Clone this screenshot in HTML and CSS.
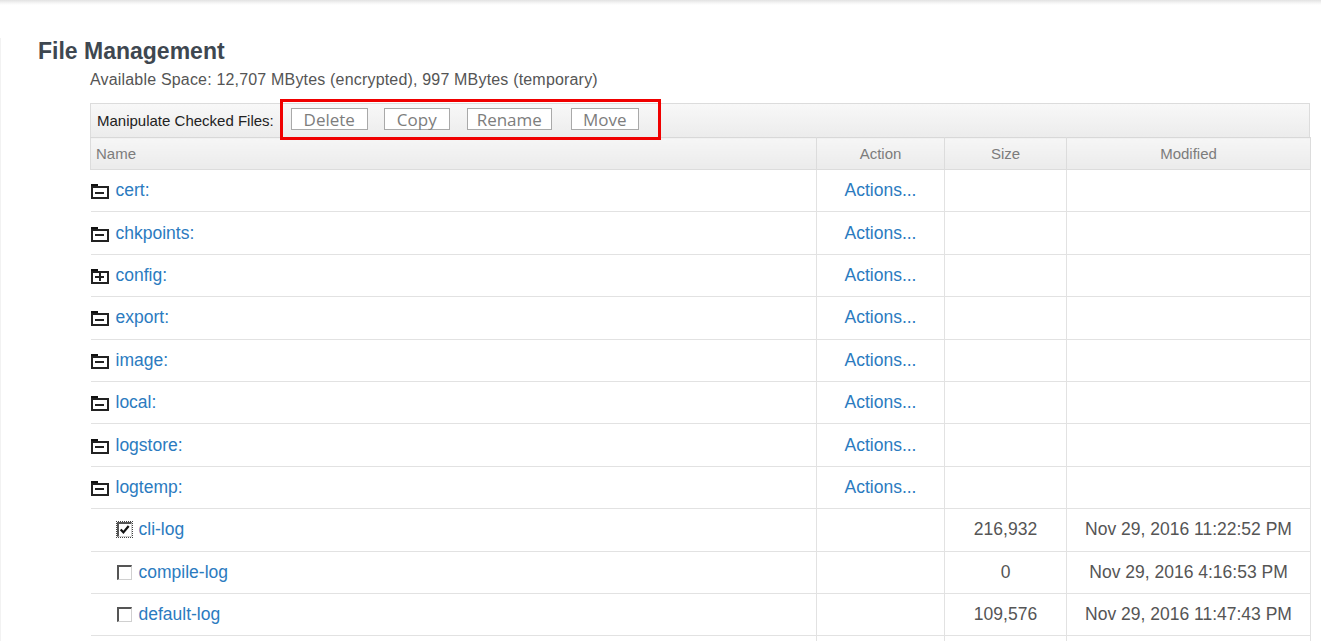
FILE: index.html
```html
<!DOCTYPE html>
<html>
<head>
<meta charset="utf-8">
<title>File Management</title>
<link rel="stylesheet" href="styles.css">
</head>
<body>
<div class="topshade"></div>
<div class="page">
  <h1 class="title">File Management</h1>
  <div class="content">
    <div class="space">Available Space: 12,707 MBytes (encrypted), 997 MBytes (temporary)</div>
    <div class="toolbar">
      <span class="tb-label">Manipulate Checked Files:</span>
      <div class="btn-group">
        <button class="btn btn-delete">Delete</button>
        <button class="btn btn-copy">Copy</button>
        <button class="btn btn-rename">Rename</button>
        <button class="btn btn-move">Move</button>
      </div>
    </div>
    <table class="files">
      <colgroup>
        <col class="c-name"><col class="c-action"><col class="c-size"><col class="c-mod">
      </colgroup>
      <thead>
        <tr><th class="h-name">Name</th><th>Action</th><th>Size</th><th>Modified</th></tr>
      </thead>
      <tbody>
        <tr><td class="name"><span class="folder minus"></span><a href="#">cert:</a></td><td class="act"><a href="#">Actions...</a></td><td></td><td></td></tr>
        <tr><td class="name"><span class="folder minus"></span><a href="#">chkpoints:</a></td><td class="act"><a href="#">Actions...</a></td><td></td><td></td></tr>
        <tr><td class="name"><span class="folder plus"></span><a href="#">config:</a></td><td class="act"><a href="#">Actions...</a></td><td></td><td></td></tr>
        <tr><td class="name"><span class="folder minus"></span><a href="#">export:</a></td><td class="act"><a href="#">Actions...</a></td><td></td><td></td></tr>
        <tr><td class="name"><span class="folder minus"></span><a href="#">image:</a></td><td class="act"><a href="#">Actions...</a></td><td></td><td></td></tr>
        <tr><td class="name"><span class="folder minus"></span><a href="#">local:</a></td><td class="act"><a href="#">Actions...</a></td><td></td><td></td></tr>
        <tr><td class="name"><span class="folder minus"></span><a href="#">logstore:</a></td><td class="act"><a href="#">Actions...</a></td><td></td><td></td></tr>
        <tr><td class="name"><span class="folder minus"></span><a href="#">logtemp:</a></td><td class="act"><a href="#">Actions...</a></td><td></td><td></td></tr>
        <tr><td class="name file"><span class="cb checked"><svg viewBox="0 0 10 10" width="11" height="11"><path d="M1.5 5 L4 7.6 L8.8 1.8" fill="none" stroke="#111" stroke-width="2"/></svg></span><a href="#">cli-log</a></td><td></td><td class="num">216,932</td><td class="num">Nov 29, 2016 11:22:52 PM</td></tr>
        <tr><td class="name file"><span class="cb"></span><a href="#">compile-log</a></td><td></td><td class="num">0</td><td class="num">Nov 29, 2016 4:16:53 PM</td></tr>
        <tr><td class="name file"><span class="cb"></span><a href="#">default-log</a></td><td></td><td class="num">109,576</td><td class="num">Nov 29, 2016 11:47:43 PM</td></tr>
        <tr><td class="name file"></td><td></td><td></td><td></td></tr>
      </tbody>
    </table>
  </div>
</div>
</body>
</html>
```

FILE: styles.css
```css
html, body {
  margin: 0;
  padding: 0;
  background: #fff;
  font-family: "Liberation Sans", Arial, sans-serif;
  overflow: hidden;
}

.topshade {
  height: 5px;
  background: linear-gradient(#e2e2e2, #f6f6f6 60%, #fff);
}

.page {
  padding-left: 38px;
  box-shadow: inset 1px 0 #f2f2f2;
}

.title {
  margin: 33px 0 0 0;
  font-size: 23px;
  line-height: 26px;
  font-weight: bold;
  color: #3e4750;
}

.content {
  margin-left: 52px;
  width: 1220px;
}

.space {
  margin-top: 7px;
  font-size: 16px;
  line-height: 18px;
  letter-spacing: 0.18px;
  color: #555;
}

.toolbar {
  margin-top: 14px;
  height: 34px;
  box-sizing: border-box;
  border: 1px solid #dcdcdc;
  border-bottom: none;
  background: linear-gradient(#f8f8f8, #ececec);
  display: flex;
  align-items: center;
  padding-left: 6px;
}

.tb-label {
  font-size: 15px;
  color: #222;
  margin-right: 6px;
}

.btn-group {
  flex: none;
  height: 41px;
  box-sizing: border-box;
  border: 3px solid #f00000;
  padding: 0 19px 0 8px;
  display: flex;
  align-items: center;
  gap: 16px;
  margin-top: -3px;
}

.btn {
  height: 22px;
  box-sizing: border-box;
  border: 1px solid #a9a9a9;
  background: #fff;
  font-family: "Open Sans", "DejaVu Sans", sans-serif;
  font-size: 17px;
  color: #7d7d7d;
  padding: 0;
  line-height: 19px;
  text-align: center;
}

.btn-delete { width: 77px; }
.btn-copy { width: 66px; }
.btn-rename { width: 85px; margin-left: 1px; }
.btn-move { width: 68px; margin-left: 3px; }

.files {
  width: 1220px;
  table-layout: fixed;
  border-collapse: collapse;
}

.c-name { width: 726px; }
.c-action { width: 128px; }
.c-size { width: 122px; }
.c-mod { width: 244px; }

.files th {
  height: 31px;
  padding: 0;
  font-weight: normal;
  font-size: 15px;
  color: #7c7c7c;
  text-align: center;
  background: linear-gradient(#f6f6f6, #ebebeb);
  border: 1px solid #dcdcdc;
  border-top: 1px solid #d8d8d8;
}

.files th.h-name {
  text-align: left;
  padding-left: 5px;
}

.files td {
  height: 41.4px;
  padding: 0;
  border-bottom: 1px solid #e2e2e2;
  border-left: 1px solid #e2e2e2;
  border-right: 1px solid #e2e2e2;
  font-size: 17.5px;
  vertical-align: middle;
}

.files td.name {
  border-left: none;
}

.files a {
  color: #2b7bbf;
  text-decoration: none;
}

.files td.act {
  text-align: center;
}

.files td.num {
  text-align: center;
  color: #555;
}

.name {
  white-space: nowrap;
}

.folder {
  display: inline-block;
  position: relative;
  width: 18px;
  height: 15px;
  vertical-align: -3px;
  margin-right: 7px;
}

.folder::before {
  content: "";
  position: absolute;
  left: 0;
  top: 0;
  width: 7px;
  height: 3px;
  background: #111;
}

.folder::after {
  content: "";
  position: absolute;
  left: 0;
  top: 2px;
  width: 18px;
  height: 13px;
  box-sizing: border-box;
  border: 2px solid #222;
  background:
    linear-gradient(#222, #222) center / 9px 2px no-repeat;
}

.folder.plus::after {
  background:
    linear-gradient(#222, #222) center / 9px 2px no-repeat,
    linear-gradient(#222, #222) center / 2px 8px no-repeat;
}

.file {
  padding-left: 26px !important;
}

.cb {
  display: inline-block;
  width: 15px;
  height: 15px;
  box-sizing: border-box;
  border-top: 2px solid #555;
  border-left: 2px solid #555;
  border-right: 1px solid #d0d0d0;
  border-bottom: 1px solid #d0d0d0;
  background: #fff;
  vertical-align: -2px;
  margin-right: 7px;
  position: relative;
}

.cb svg {
  position: absolute;
  left: 0;
  top: 0;
}

.cb.checked {
  outline: 1px dotted #444;
  outline-offset: 0;
}
```
